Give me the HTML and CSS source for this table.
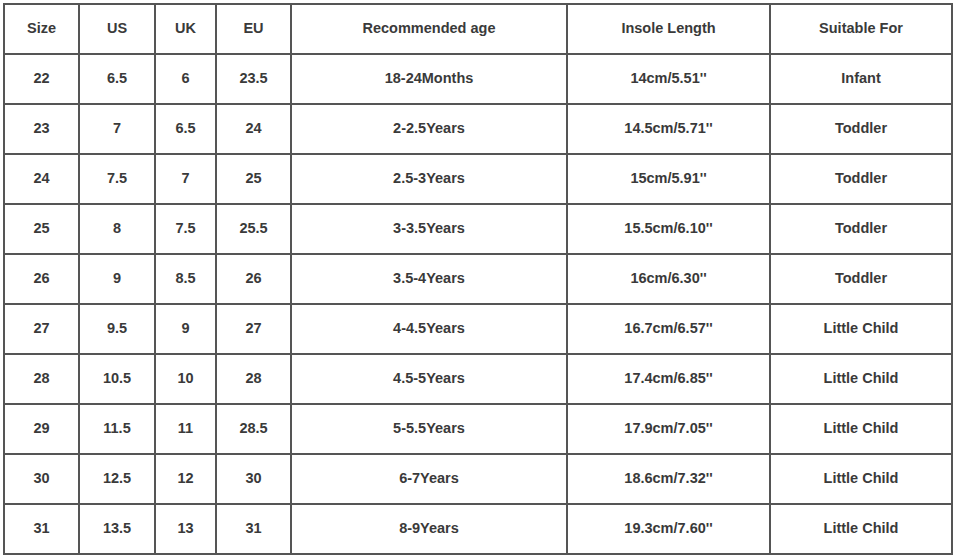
FILE: index.html
```html
<!DOCTYPE html>
<html>
<head>
<meta charset="utf-8">
<link rel="stylesheet" href="styles.css">
</head>
<body>
<table class="size-table">
  <colgroup>
    <col class="c1"><col class="c2"><col class="c3"><col class="c4"><col class="c5"><col class="c6"><col class="c7">
  </colgroup>
  <tr><td>Size</td><td>US</td><td>UK</td><td>EU</td><td>Recommended age</td><td>Insole Length</td><td>Suitable For</td></tr>
  <tr><td>22</td><td>6.5</td><td>6</td><td>23.5</td><td>18-24Months</td><td>14cm/5.51''</td><td>Infant</td></tr>
  <tr><td>23</td><td>7</td><td>6.5</td><td>24</td><td>2-2.5Years</td><td>14.5cm/5.71''</td><td>Toddler</td></tr>
  <tr><td>24</td><td>7.5</td><td>7</td><td>25</td><td>2.5-3Years</td><td>15cm/5.91''</td><td>Toddler</td></tr>
  <tr><td>25</td><td>8</td><td>7.5</td><td>25.5</td><td>3-3.5Years</td><td>15.5cm/6.10''</td><td>Toddler</td></tr>
  <tr><td>26</td><td>9</td><td>8.5</td><td>26</td><td>3.5-4Years</td><td>16cm/6.30''</td><td>Toddler</td></tr>
  <tr><td>27</td><td>9.5</td><td>9</td><td>27</td><td>4-4.5Years</td><td>16.7cm/6.57''</td><td>Little Child</td></tr>
  <tr><td>28</td><td>10.5</td><td>10</td><td>28</td><td>4.5-5Years</td><td>17.4cm/6.85''</td><td>Little Child</td></tr>
  <tr><td>29</td><td>11.5</td><td>11</td><td>28.5</td><td>5-5.5Years</td><td>17.9cm/7.05''</td><td>Little Child</td></tr>
  <tr><td>30</td><td>12.5</td><td>12</td><td>30</td><td>6-7Years</td><td>18.6cm/7.32''</td><td>Little Child</td></tr>
  <tr><td>31</td><td>13.5</td><td>13</td><td>31</td><td>8-9Years</td><td>19.3cm/7.60''</td><td>Little Child</td></tr>
</table>
</body>
</html>
```
FILE: styles.css
```css
html, body {
  margin: 0;
  padding: 0;
  background: #ffffff;
}
body {
  padding: 3px 0 0 3px;
  font-family: "Liberation Sans", Arial, sans-serif;
}
.size-table {
  border-collapse: separate;
  border-spacing: 0;
  table-layout: fixed;
  width: 950px;
  border-left: 2px solid #555;
  border-top: 2px solid #555;
}
.size-table td {
  box-sizing: border-box;
  height: 50px;
  padding: 0 0 3px 0;
  border-right: 2px solid #555;
  border-bottom: 2px solid #555;
  text-align: center;
  vertical-align: middle;
  font-size: 14.5px;
  font-weight: bold;
  color: #3a3a3a;
}
.c1 { width: 75px; }
.c2 { width: 76px; }
.c3 { width: 61px; }
.c4 { width: 75px; }
.c5 { width: 276px; }
.c6 { width: 203px; }
.c7 { width: 182px; }
```
